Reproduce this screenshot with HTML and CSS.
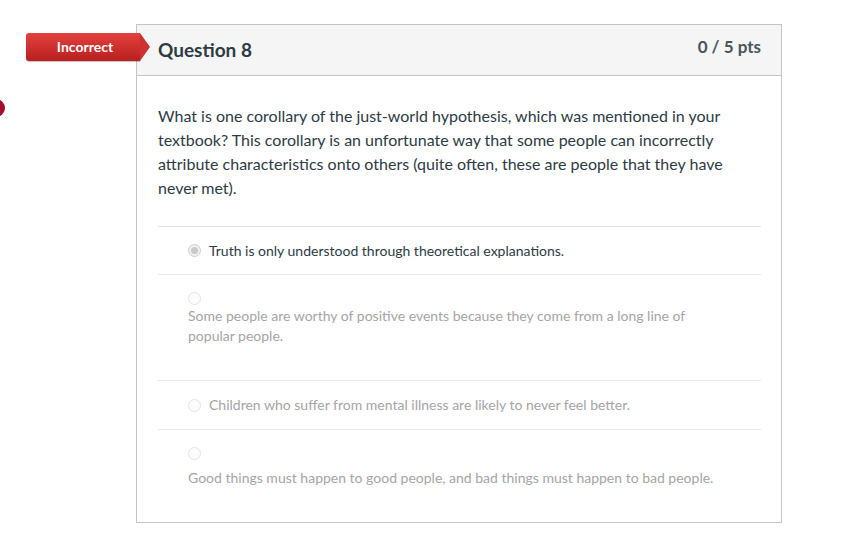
FILE: index.html
```html
<!DOCTYPE html>
<html>
<head>
<meta charset="utf-8">
<link rel="stylesheet" href="styles.css">
</head>
<body>
<div class="page">
  <span class="dot"></span>
  <div class="badge">Incorrect</div>
  <div class="card">
    <div class="card-header">
      <h2 class="q-title">Question 8</h2>
      <span class="pts">0 / 5 pts</span>
    </div>
    <div class="card-body">
      <p class="q-text">What is one corollary of the just-world hypothesis, which was mentioned in your textbook? This corollary is an unfortunate way that some people can incorrectly attribute characteristics onto others (quite often, these are people that they have never met).</p>
      <div class="answers">
        <div class="answer inline selected">
          <span class="radio checked"></span>
          <span class="a-text">Truth is only understood through theoretical explanations.</span>
        </div>
        <div class="answer block tall">
          <span class="radio"></span>
          <span class="a-text">Some people are worthy of positive events because they come from a long line of popular people.</span>
        </div>
        <div class="answer inline">
          <span class="radio"></span>
          <span class="a-text">Children who suffer from mental illness are likely to never feel better.</span>
        </div>
        <div class="answer block last">
          <span class="radio"></span>
          <span class="a-text">Good things must happen to good people, and bad things must happen to bad people.</span>
        </div>
      </div>
    </div>
  </div>
</div>
</body>
</html>
```

FILE: styles.css
```css
* { box-sizing: border-box; }
html, body {
  margin: 0;
  padding: 0;
  background: #fff;
  font-family: Lato, "Open Sans", "Liberation Sans", sans-serif;
  color: #2d3b45;
}
.page {
  position: relative;
  padding: 24px 0 0 136px;
  width: 848px;
  height: 537px;
  overflow: hidden;
}
.dot {
  position: absolute;
  left: -13px;
  top: 99px;
  width: 18px;
  height: 18px;
  border-radius: 50%;
  background: #a50e2d;
}
.badge {
  position: absolute;
  left: 26px;
  top: 33px;
  width: 114px;
  height: 28px;
  padding-left: 4px;
  background: linear-gradient(#e2423f, #b91f1f);
  border-radius: 3px 0 0 3px;
  color: #fff;
  font-weight: 700;
  font-size: 14px;
  line-height: 27px;
  text-align: center;
  box-shadow: 0 1px 1px rgba(0,0,0,0.25);
  z-index: 2;
}
.badge::after {
  content: "";
  position: absolute;
  right: -10px;
  top: 0;
  border-top: 14px solid transparent;
  border-bottom: 14px solid transparent;
  border-left: 10px solid #cd3130;
}
.card {
  width: 646px;
  height: 499px;
  border: 1px solid #c4c4c4;
}
.card-header {
  height: 51px;
  background: #f5f5f5;
  border-bottom: 1px solid #c4c4c4;
  display: flex;
  justify-content: space-between;
  align-items: flex-start;
  padding: 0 20px 0 21px;
}
.q-title {
  margin: 13px 0 0;
  font-size: 19px;
  font-weight: 700;
  line-height: 24px;
  color: #2d3b45;
}
.pts {
  margin-top: 10px;
  font-size: 17px;
  font-weight: 700;
  line-height: 24px;
  color: #4a545b;
}
.card-body {
  padding: 0 20px 0 21px;
}
.q-text {
  margin: 28px 0 0;
  font-size: 16px;
  line-height: 24px;
  color: #2d3b45;
}
.answers {
  margin-top: 26px;
  border-top: 1px solid #e2e2e2;
}
.answer {
  border-bottom: 1px solid #e8e8e8;
  padding: 0 0 0 30px;
  font-size: 14px;
  line-height: 20px;
  color: #a5a5a5;
}
.answer.last { border-bottom: none; }
.answer.inline {
  display: flex;
  align-items: center;
  height: 49px;
}
.answer.inline.selected { height: 48px; }
.answer.inline .radio { margin-right: 8px; }
.answer.block {
  padding-top: 17px;
}
.answer.block .a-text {
  display: block;
  max-width: 530px;
}
.answer.block .radio {
  display: block;
  margin-bottom: 1px;
}
.answer.tall { height: 106px; }
.answer.last { height: 92px; padding-top: 17px; }
.answer.last .radio { margin-bottom: 8px; }
.answer.selected { color: #2d3b45; }
.radio {
  flex: none;
  width: 13px;
  height: 13px;
  border-radius: 50%;
  border: 1px solid #e3e3e3;
  background: #fdfdfd;
  position: relative;
}
.radio.checked {
  border-color: #cfcfcf;
  background: #f0f0f0;
}
.radio.checked::after {
  content: "";
  position: absolute;
  left: 2px;
  top: 2px;
  width: 7px;
  height: 7px;
  border-radius: 50%;
  background: #c9c9c9;
}
```
